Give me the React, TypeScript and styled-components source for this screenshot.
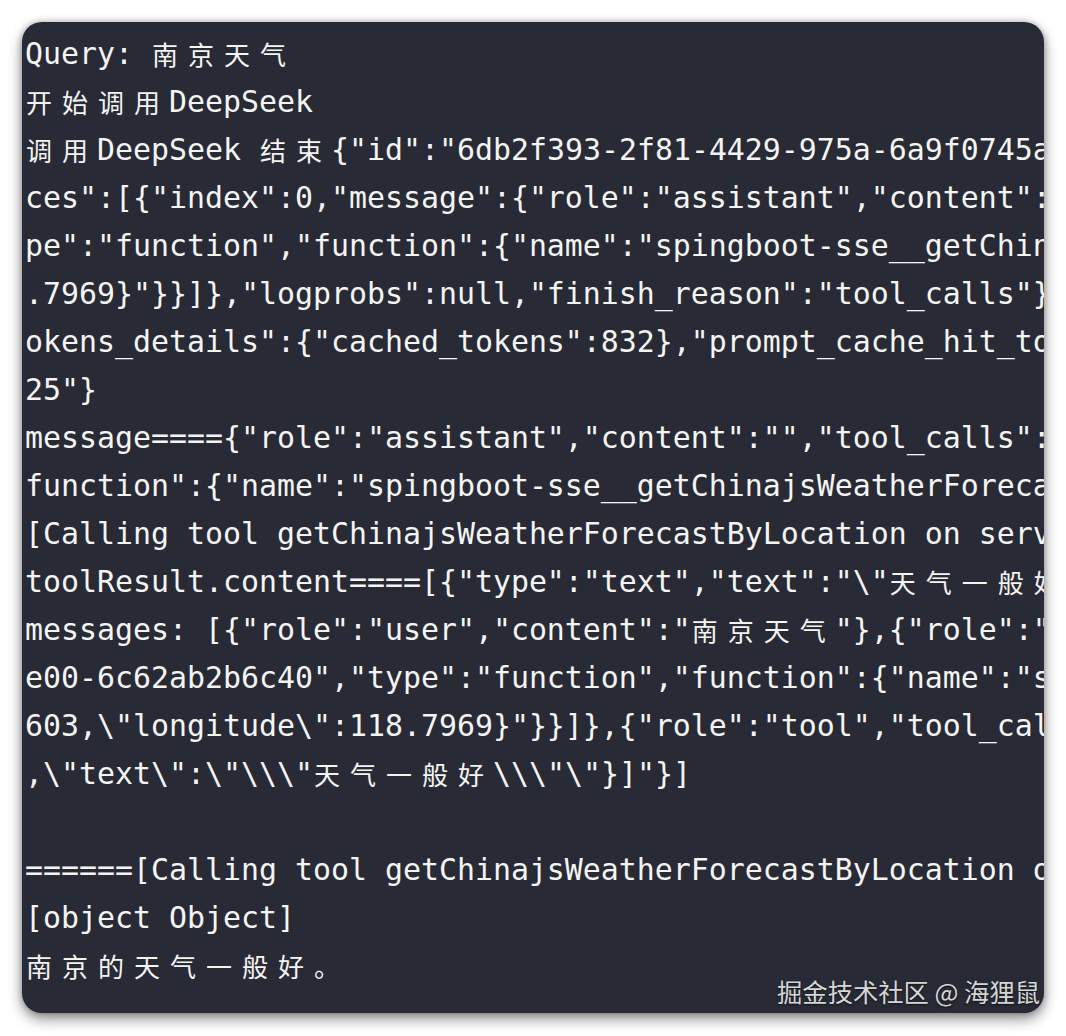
import React from "react";
import styled, { createGlobalStyle } from "styled-components";

const GlobalStyle = createGlobalStyle`
  html, body {
    margin: 0;
    padding: 0;
    background: #ffffff;
  }
`;

const Page = styled.div`
  padding: 22px;
  width: 1066px;
  box-sizing: border-box;
`;

const Terminal = styled.div`
  position: relative;
  width: 1022px;
  height: 991px;
  box-sizing: border-box;
  padding: 8px 0 0 3px;
  background: #282a35;
  border-radius: 20px;
  overflow: hidden;
  box-shadow: 0 6px 14px rgba(0, 0, 0, 0.45), 0 0 6px rgba(0, 0, 0, 0.25);
  display: flex;
  flex-direction: column;
`;

const Line = styled.div`
  height: 48px;
  line-height: 48px;
  white-space: pre;
  font-family: "DejaVu Sans Mono", monospace;
  font-size: 29.9px;
  color: #f4f4f2;
`;

const Wide = styled.span`
  display: inline-block;
  width: 36px;
  box-sizing: border-box;
  padding-left: 1px;
  font-family: "Noto Sans CJK SC", sans-serif;
  font-size: 26px;
  text-align: left;
  vertical-align: top;
`;

const Watermark = styled.div`
  position: absolute;
  right: 4px;
  bottom: 4px;
  font-family: "Noto Sans CJK SC", "Noto Sans", sans-serif;
  font-size: 25.3px;
  color: #d6d6d6;
  text-shadow: 0 1px 2px rgba(0, 0, 0, 0.6);
  white-space: pre;
`;

const isWide = (ch: string) => /[\u3000-\u9fff\uff00-\uffef]/.test(ch);

const TermLine: React.FC<{ text: string }> = ({ text }) => {
  const parts: React.ReactNode[] = [];
  let buf = "";
  Array.from(text).forEach((ch, i) => {
    if (isWide(ch)) {
      if (buf) {
        parts.push(buf);
        buf = "";
      }
      parts.push(<Wide key={i}>{ch}</Wide>);
    } else {
      buf += ch;
    }
  });
  if (buf) parts.push(buf);
  return <Line>{parts.length ? parts : " "}</Line>;
};

const lines: string[] = [
  "Query: 南京天气",
  "开始调用DeepSeek",
  '调用DeepSeek 结束{"id":"6db2f393-2f81-4429-975a-6a9f0745a1c2","object":"chat.completion","choi',
  'ces":[{"index":0,"message":{"role":"assistant","content":"","tool_calls":[{"index":0,"id":"call_0","ty',
  'pe":"function","function":{"name":"spingboot-sse__getChinajsWeatherForecastByLocation","arguments":"{\\"latitude\\":32.0603,\\"longitude\\":118',
  '.7969}"}}]},"logprobs":null,"finish_reason":"tool_calls"}],"usage":{"prompt_tokens":1025,"completion_tokens":40,"total_tokens":1065,"prompt_t',
  'okens_details":{"cached_tokens":832},"prompt_cache_hit_tokens":832,"prompt_cache_miss_tokens":193},"system_fingerprint":"fp_3d5141a69a_prod03',
  '25"}',
  'message===={"role":"assistant","content":"","tool_calls":[{"id":"call_0","type":"function","',
  'function":{"name":"spingboot-sse__getChinajsWeatherForecastByLocation","arguments":"{}"}}]}',
  "[Calling tool getChinajsWeatherForecastByLocation on server spingboot-sse]",
  'toolResult.content====[{"type":"text","text":"\\"天气一般好\\""}]',
  'messages: [{"role":"user","content":"南京天气"},{"role":"assistant","content":"","tool_calls":[{"id":"call_0-',
  'e00-6c62ab2b6c40","type":"function","function":{"name":"spingboot-sse__getChinajsWeatherForecastByLocation","arguments":"{\\"latitude\\":32.0',
  '603,\\"longitude\\":118.7969}"}}]},{"role":"tool","tool_call_id":"call_0","content":"[{\\"type\\":\\"text\\"',
  ',\\"text\\":\\"\\\\\\"天气一般好\\\\\\"\\"}]"}]',
  "",
  "======[Calling tool getChinajsWeatherForecastByLocation on server spingboot-sse]",
  "[object Object]",
  "南京的天气一般好。",
];

export default function App() {
  return (
    <>
      <GlobalStyle />
      <Page>
        <Terminal>
          {lines.map((l, i) => (
            <TermLine key={i} text={l} />
          ))}
          <Watermark>掘金技术社区 @ 海狸鼠</Watermark>
        </Terminal>
      </Page>
    </>
  );
}
